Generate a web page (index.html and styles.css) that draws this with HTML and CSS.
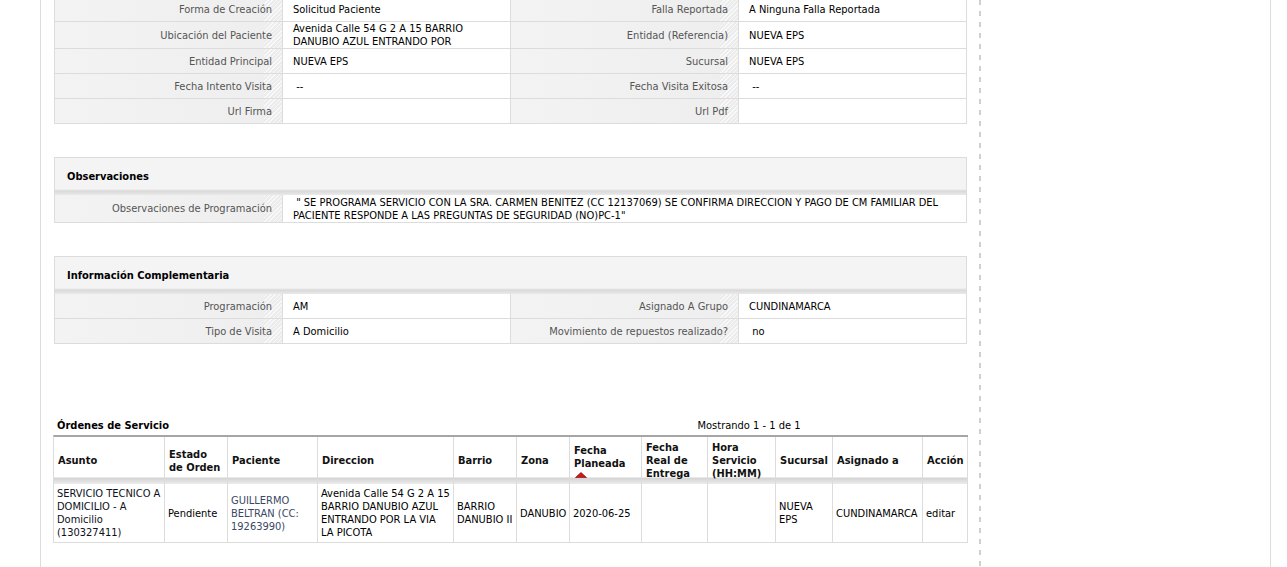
FILE: index.html
```html
<!DOCTYPE html>
<html lang="es">

<head>
    <meta charset="UTF-8">
    <meta name="viewport" content="width=device-width, initial-scale=1.0">
    <link rel="stylesheet" href="styles.css">
    <title>Detalle de Solicitud</title>
</head>

<body>
    <div class="pagina">
        <main class="contenido">
            <div class="detalle primero">
                <div class="etiqueta">Forma de Creación</div>
                <div class="valor">Solicitud Paciente</div>
                <div class="etiqueta">Falla Reportada</div>
                <div class="valor">A Ninguna Falla Reportada</div>

                <div class="etiqueta">Ubicación del Paciente</div>
                <div class="valor">Avenida Calle 54 G 2 A 15 BARRIO<br>DANUBIO AZUL ENTRANDO POR</div>
                <div class="etiqueta">Entidad (Referencia)</div>
                <div class="valor">NUEVA EPS</div>

                <div class="etiqueta">Entidad Principal</div>
                <div class="valor">NUEVA EPS</div>
                <div class="etiqueta">Sucursal</div>
                <div class="valor">NUEVA EPS</div>

                <div class="etiqueta">Fecha Intento Visita</div>
                <div class="valor">&nbsp;--</div>
                <div class="etiqueta">Fecha Visita Exitosa</div>
                <div class="valor">&nbsp;--</div>

                <div class="etiqueta">Url Firma</div>
                <div class="valor"></div>
                <div class="etiqueta">Url Pdf</div>
                <div class="valor"></div>
            </div>

            <section class="panel">
                <h3 class="panel-titulo">Observaciones</h3>
                <div class="detalle">
                    <div class="etiqueta">Observaciones de Programación</div>
                    <div class="valor ancho">&nbsp;" SE PROGRAMA SERVICIO CON LA SRA. CARMEN BENITEZ (CC 12137069) SE CONFIRMA DIRECCION Y PAGO DE CM FAMILIAR DEL<br>PACIENTE RESPONDE A LAS PREGUNTAS DE SEGURIDAD (NO)PC-1"</div>
                </div>
            </section>

            <section class="panel">
                <h3 class="panel-titulo">Información Complementaria</h3>
                <div class="detalle">
                    <div class="etiqueta">Programación</div>
                    <div class="valor">AM</div>
                    <div class="etiqueta">Asignado A Grupo</div>
                    <div class="valor">CUNDINAMARCA</div>

                    <div class="etiqueta">Tipo de Visita</div>
                    <div class="valor">A Domicilio</div>
                    <div class="etiqueta">Movimiento de repuestos realizado?</div>
                    <div class="valor">&nbsp;no</div>
                </div>
            </section>

            <div class="ordenes">
                <div class="ordenes-cab">
                    <span class="ordenes-titulo">Órdenes de Servicio</span>
                    <span class="paginacion">Mostrando 1 - 1 de 1</span>
                </div>
                <table class="tabla">
                    <colgroup>
                        <col style="width:111px">
                        <col style="width:63px">
                        <col style="width:90px">
                        <col style="width:136px">
                        <col style="width:63px">
                        <col style="width:53px">
                        <col style="width:72px">
                        <col style="width:66px">
                        <col style="width:68px">
                        <col style="width:57px">
                        <col style="width:90px">
                        <col style="width:45px">
                    </colgroup>
                    <thead>
                        <tr>
                            <th>Asunto</th>
                            <th>Estado de Orden</th>
                            <th>Paciente</th>
                            <th>Direccion</th>
                            <th>Barrio</th>
                            <th>Zona</th>
                            <th>Fecha Planeada
                                <svg class="flecha" width="12" height="6" viewBox="0 0 12 6">
                                    <polygon points="6,0.5 11.5,5.6 0.5,5.6" fill="#d41515" stroke="#7a0a0a" stroke-width="0.7" />
                                </svg>
                            </th>
                            <th>Fecha Real de Entrega</th>
                            <th>Hora Servicio (HH:MM)</th>
                            <th>Sucursal</th>
                            <th>Asignado a</th>
                            <th>Acción</th>
                        </tr>
                    </thead>
                    <tbody>
                        <tr>
                            <td class="asunto">SERVICIO TECNICO A DOMICILIO - A Domicilio (130327411)</td>
                            <td>Pendiente</td>
                            <td class="paciente">GUILLERMO BELTRAN (CC: 19263990)</td>
                            <td>Avenida Calle 54 G 2 A 15 BARRIO DANUBIO AZUL ENTRANDO POR LA VIA LA PICOTA</td>
                            <td>BARRIO DANUBIO II</td>
                            <td>DANUBIO</td>
                            <td>2020-06-25</td>
                            <td></td>
                            <td></td>
                            <td>NUEVA EPS</td>
                            <td>CUNDINAMARCA</td>
                            <td>editar</td>
                        </tr>
                    </tbody>
                </table>
            </div>
        </main>
        <aside class="lateral"></aside>
    </div>
</body>

</html>
```

FILE: styles.css
```css
* {
    box-sizing: border-box;
}

body {
    margin: 0;
    font-family: "DejaVu Sans Condensed", "DejaVu Sans", sans-serif;
    font-size: 11px;
    line-height: 13px;
    color: #000;
    background: #fff;
}

.pagina {
    display: flex;
    min-height: 100vh;
}

.contenido {
    width: 939px;
    margin-left: 40px;
    padding-left: 13px;
    border-left: 1px solid #dcdcdc;
}

.lateral {
    width: 292px;
    border-right: 1px solid #dcdcdc;
    background: repeating-linear-gradient(to bottom, #cfcfcf 0 5px, transparent 5px 11px) left top / 2px 100% no-repeat;
}

/* grilla de etiqueta / valor */
.detalle {
    display: grid;
    grid-template-columns: repeat(4, 228px);
    width: 913px;
    border-left: 1px solid #dcdcdc;
}

.primero {
    margin-top: -3px;
}

.etiqueta,
.valor {
    min-height: 25px;
    display: flex;
    align-items: center;
    border-right: 1px solid #dcdcdc;
    border-bottom: 1px solid #dcdcdc;
}

.etiqueta {
    justify-content: flex-end;
    text-align: right;
    padding-right: 10px;
    color: #555;
    background:
        repeating-linear-gradient(-45deg, #f9f9f9 0 1px, #ececec 1px 3px) right top / 18px 100% no-repeat,
        linear-gradient(to right, #f3f3f3, #eeeeee);
}

.valor {
    padding-left: 10px;
    padding-right: 6px;
    background: #fff;
}

.ancho {
    grid-column: 2 / 5;
    min-height: 28px;
}

/* paneles */
.panel {
    margin-top: 33px;
}

.panel-titulo {
    margin: 0;
    width: 913px;
    height: 38px;
    padding-left: 12px;
    display: flex;
    align-items: center;
    font-size: 11px;
    font-weight: bold;
    border: 1px solid #dcdcdc;
    border-bottom: none;
    background: linear-gradient(to bottom, #f4f4f4 0, #f4f4f4 31px, #d9d9d9 33px, #e9e9e9 37px);
}

/* ordenes de servicio */
.ordenes {
    margin-top: 71px;
    margin-left: -1px;
    width: 915px;
}

.ordenes-cab {
    display: flex;
    align-items: center;
    height: 20px;
}

.ordenes-titulo {
    flex: 1;
    padding-left: 4px;
    font-weight: bold;
}

.paginacion {
    width: 438px;
    text-align: center;
}

.tabla {
    width: 915px;
    table-layout: fixed;
    border-collapse: separate;
    border-spacing: 0;
    border-top: 2px solid #a6a6a6;
    border-left: 1px solid #dcdcdc;
}

.tabla thead tr {
    height: 47px;
}

.tabla th {
    padding: 0 4px;
    text-align: left;
    vertical-align: middle;
    font-weight: bold;
    color: #111;
    border-right: 1px solid #dcdcdc;
    background: linear-gradient(to bottom, #fff 0, #fff 40px, #d3d3d3 41px, #ececec 47px);
}

.flecha {
    display: block;
    margin: 2px 0 0 1px;
}

.tabla td {
    padding: 3px;
    vertical-align: middle;
    border-right: 1px solid #dcdcdc;
    border-bottom: 1px solid #dcdcdc;
}

.asunto {
    color: #0d1020;
}

.paciente {
    color: #3a4866;
}
```
